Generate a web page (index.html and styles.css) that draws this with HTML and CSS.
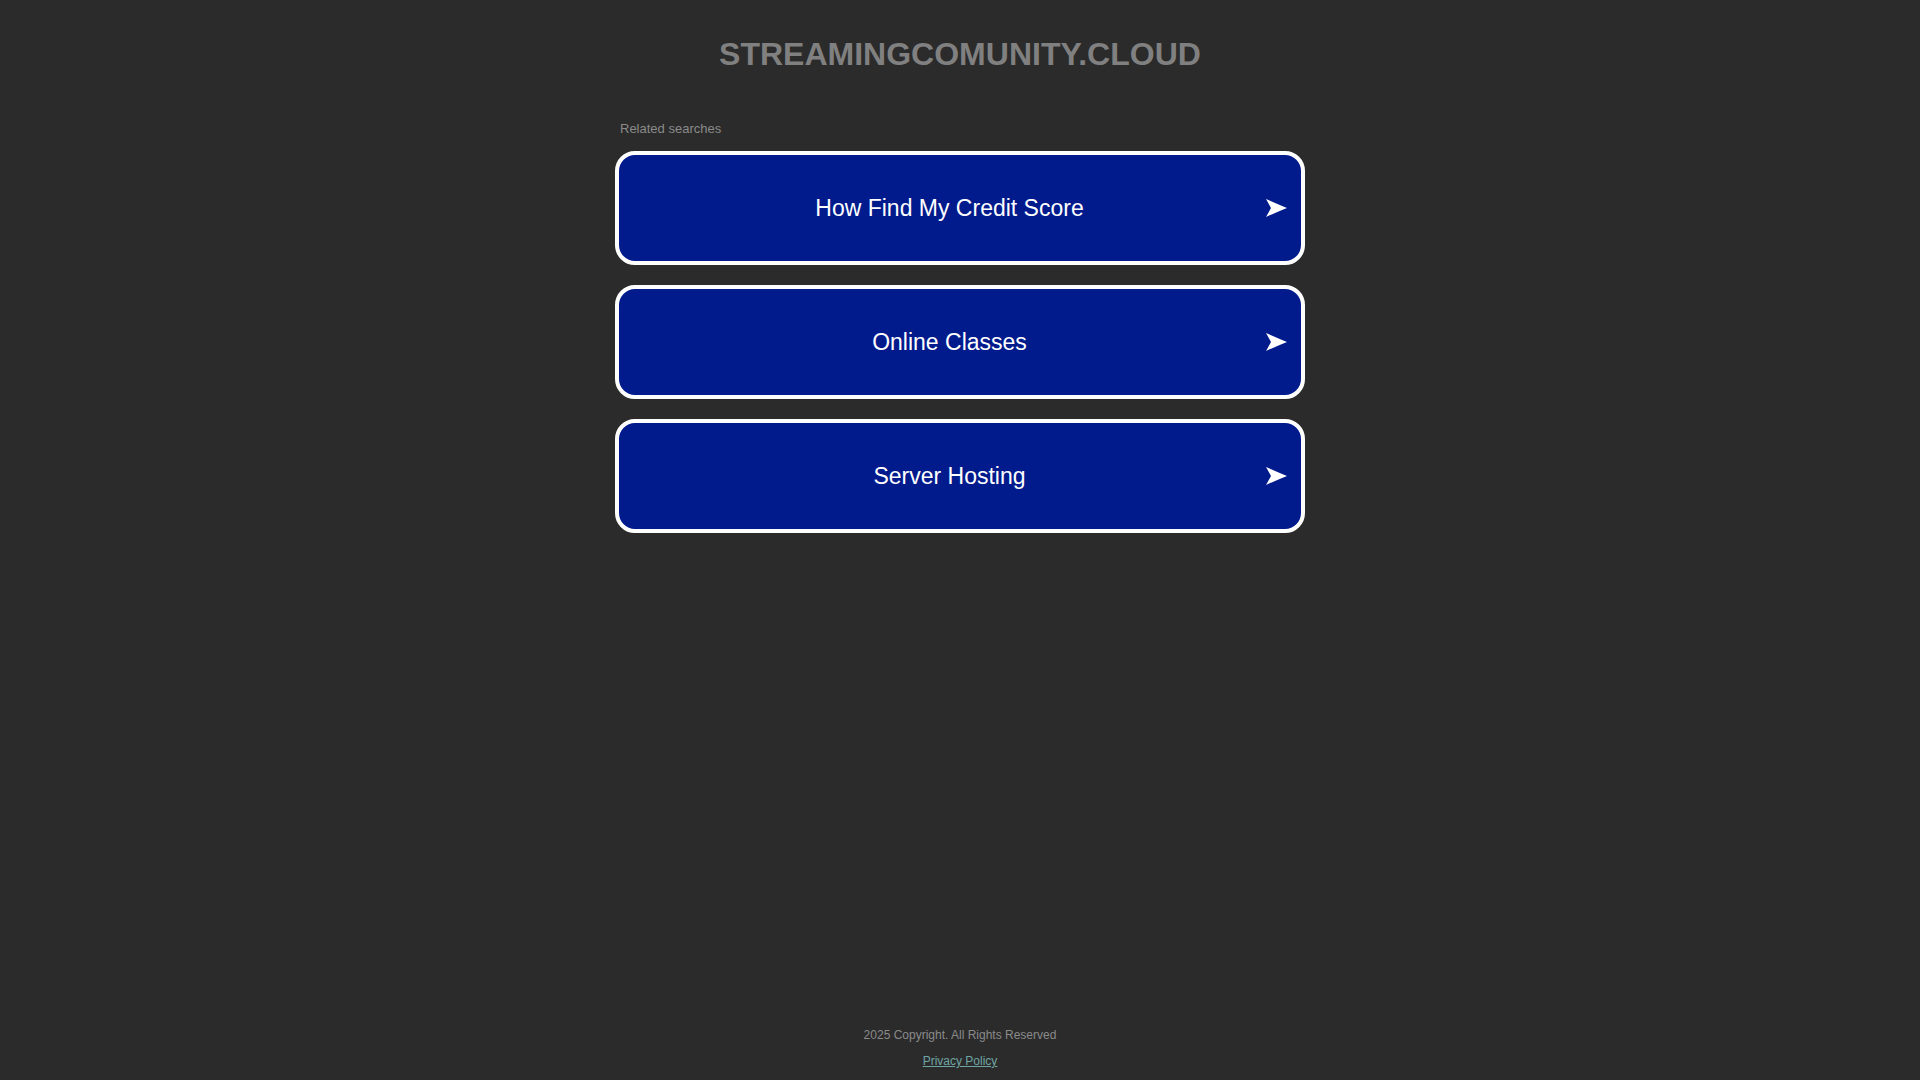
FILE: index.html
```html
<!DOCTYPE html>
<html lang="en">
<head>
<meta charset="utf-8">
<title>streamingcomunity.cloud</title>
<link rel="stylesheet" href="styles.css">
</head>
<body>
<div class="page">
  <header class="header">
    <h1 class="domain">STREAMINGCOMUNITY.CLOUD</h1>
  </header>
  <main class="content">
    <div class="label">Related searches</div>
    <a class="search" href="#">
      <span class="search-text">How Find My Credit Score</span>
      <svg class="arrow" width="21" height="18" viewBox="0 0 21 18"><path d="M0 0 Q11 5 21 9 Q11 13 0 18 L5 9 Z" fill="#fff"/></svg>
    </a>
    <a class="search" href="#">
      <span class="search-text">Online Classes</span>
      <svg class="arrow" width="21" height="18" viewBox="0 0 21 18"><path d="M0 0 Q11 5 21 9 Q11 13 0 18 L5 9 Z" fill="#fff"/></svg>
    </a>
    <a class="search" href="#">
      <span class="search-text">Server Hosting</span>
      <svg class="arrow" width="21" height="18" viewBox="0 0 21 18"><path d="M0 0 Q11 5 21 9 Q11 13 0 18 L5 9 Z" fill="#fff"/></svg>
    </a>
  </main>
  <footer class="footer">
    <div class="copyright">2025 Copyright. All Rights Reserved</div>
    <a class="privacy" href="#">Privacy Policy</a>
  </footer>
</div>
</body>
</html>
```
FILE: styles.css
```css
html, body {
  margin: 0;
  padding: 0;
  background: #2b2b2b;
  font-family: "Liberation Sans", Arial, sans-serif;
}
.page {
  min-height: 100vh;
  display: flex;
  flex-direction: column;
}
.header {
  padding-top: 36px;
  text-align: center;
}
.domain {
  margin: 0;
  font-size: 32px;
  line-height: 37px;
  font-weight: bold;
  color: #808080;
}
.content {
  width: 690px;
  margin: 0 auto;
  padding-top: 48px;
}
.label {
  font-size: 13px;
  line-height: 15px;
  color: #8a8a8a;
  padding-left: 5px;
  margin-bottom: 15px;
}
.search {
  box-sizing: border-box;
  display: flex;
  align-items: center;
  height: 114px;
  margin-bottom: 20px;
  padding: 0 14px;
  border: 4px solid #fff;
  border-radius: 20px;
  background: #011a8c;
  color: #fff;
  text-decoration: none;
}
.search-text {
  flex: 1;
  text-align: center;
  font-size: 23px;
}
.arrow {
  flex: none;
  display: block;
}
.footer {
  margin-top: auto;
  padding-bottom: 12px;
  text-align: center;
  font-size: 12px;
  line-height: 14px;
}
.copyright {
  color: #8a8a8a;
  margin-bottom: 12px;
}
.privacy {
  color: #6fa5a5;
  text-decoration: underline;
}
```
